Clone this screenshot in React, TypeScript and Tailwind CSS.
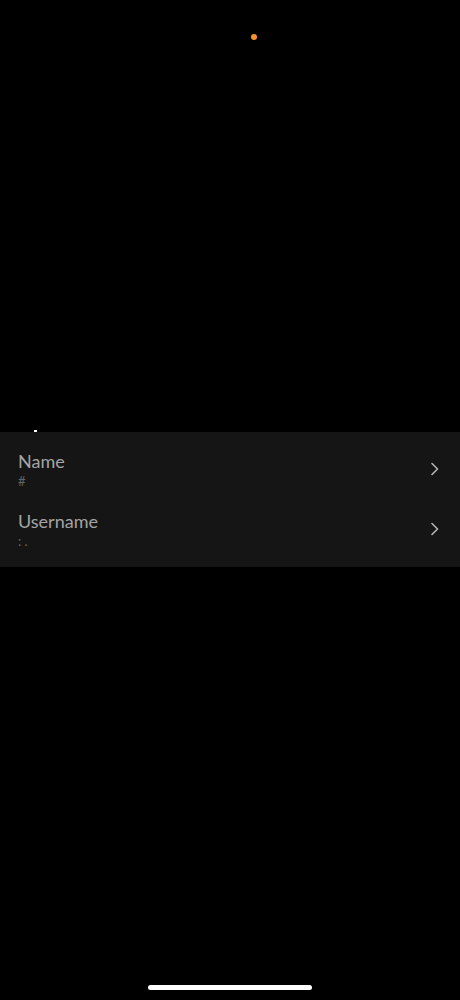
function Chevron() {
  return (
    <svg width="10" height="14" viewBox="0 0 10 14" fill="none" className="shrink-0">
      <path d="M2 1.5L7.5 7L2 12.5" stroke="#b4b4b4" strokeWidth="1.6" strokeLinecap="round" strokeLinejoin="round" />
    </svg>
  );
}

function Row({ title, sub }: { title: string; sub: string }) {
  return (
    <div className="flex h-[60px] items-start justify-between pl-[18px] pr-[20px]">
      <div className="flex flex-col">
        <span className="text-[18px] leading-[22px] text-[#a4a4a4]">{title}</span>
        <span className="mt-[2px] text-[13px] leading-[14px] text-[#666666]">{sub}</span>
      </div>
      <div className="pt-[12px]">
        <Chevron />
      </div>
    </div>
  );
}

export default function App() {
  return (
    <div
      className="flex h-[1000px] w-[460px] flex-col bg-black"
      style={{ fontFamily: "Lato, 'Noto Sans', sans-serif" }}
    >
      <div className="flex h-[432px] flex-col">
        <div className="ml-[251px] mt-[34px] h-[6px] w-[6px] rounded-full bg-[#f7902f]" />
        <div className="flex-1" />
        <div className="ml-[34px] h-[2px] w-[3px] bg-white" />
      </div>
      <div className="h-[135px] bg-[#151515] pt-[18px]">
        <Row title="Name" sub="#" />
        <Row title="Username" sub=": ." />
      </div>
      <div className="flex-1" />
      <div className="mb-[10px] flex justify-center">
        <div className="h-[5px] w-[164px] rounded-full bg-white" />
      </div>
    </div>
  );
}
